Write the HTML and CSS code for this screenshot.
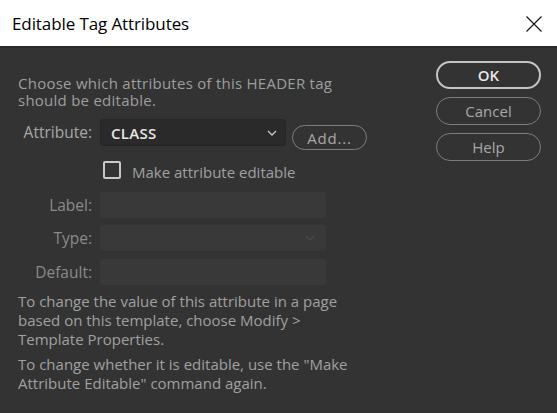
FILE: index.html
```html
<!DOCTYPE html>
<html>
<head>
<meta charset="utf-8">
<link rel="stylesheet" href="styles.css">
</head>
<body>
<div class="dialog">
  <div class="titlebar">
    <span class="title">Editable Tag Attributes</span>
    <svg class="close" width="16" height="16" viewBox="0 0 16 16"><path d="M0.5 0.5 L15.5 15.5 M15.5 0.5 L0.5 15.5" stroke="#111" stroke-width="1.1" fill="none"/></svg>
  </div>
  <div class="content">
    <div class="main">
      <p class="intro"><span class="ln">Choose which attributes of this HEADER tag</span><span class="ln">should be editable.</span></p>
      <div class="attr-row">
        <span class="lbl bright">Attribute:</span>
        <div class="select">
          <span class="val">CLASS</span>
          <svg class="chev" width="10" height="6" viewBox="0 0 10 6"><path d="M1 1 L5 5 L9 1" stroke="#c8c8c8" stroke-width="1.3" fill="none"/></svg>
        </div>
        <button class="pill add">Add...</button>
      </div>
      <div class="check-row">
        <span class="checkbox"></span>
        <span class="check-text">Make attribute editable</span>
      </div>
      <div class="field-row">
        <span class="lbl">Label:</span>
        <div class="field"></div>
      </div>
      <div class="field-row">
        <span class="lbl">Type:</span>
        <div class="field">
          <svg class="chev" width="10" height="6" viewBox="0 0 10 6"><path d="M1 1 L5 5 L9 1" stroke="#4a4a4a" stroke-width="1.3" fill="none"/></svg>
        </div>
      </div>
      <div class="field-row last">
        <span class="lbl">Default:</span>
        <div class="field"></div>
      </div>
      <p class="note">To change the value of this attribute in a page<br>based on this template, choose Modify &gt;<br>Template Properties.</p>
      <p class="note second">To change whether it is editable, use the "Make<br>Attribute Editable" command again.</p>
    </div>
    <div class="side">
      <button class="pill big ok">OK</button>
      <button class="pill big">Cancel</button>
      <button class="pill big">Help</button>
    </div>
  </div>
</div>
</body>
</html>
```

FILE: styles.css
```css
html, body {
  margin: 0;
  padding: 0;
  background: #333333;
}
body {
  font-family: "Open Sans", "Noto Sans", sans-serif;
  width: 557px;
  height: 413px;
  overflow: hidden;
}
.dialog {
  width: 557px;
  height: 413px;
  display: flex;
  flex-direction: column;
}
.titlebar {
  height: 46px;
  flex: none;
  background: #ffffff;
  display: flex;
  align-items: center;
  justify-content: space-between;
  padding: 1px 15px 0 12px;
  box-sizing: border-box;
}
.title {
  font-family: "Open Sans", "Noto Sans", sans-serif;
  font-size: 17px;
  color: #000;
  letter-spacing: -0.1px;
}
.close {
  display: block;
}
.content {
  flex: 1;
  background: #333333;
  border-top: 2px solid #2b2b2b;
  display: flex;
  justify-content: space-between;
  padding: 13px 16px 0 18px;
}
.main {
  width: 350px;
  font-size: 15px;
  color: #a3a3a3;
}
.intro {
  margin: 14px 0 0 0;
  font-size: 15px;
  letter-spacing: 0.25px;
  color: #9e9e9e;
}
.intro .ln {
  display: block;
  height: 17px;
  line-height: 17px;
  white-space: nowrap;
}
.attr-row {
  display: flex;
  align-items: flex-start;
  margin-top: 10px;
  height: 27px;
}
.lbl {
  width: 74px;
  text-align: right;
  box-sizing: border-box;
  color: #8a8a8a;
  flex: none;
  line-height: 26px;
  font-size: 15.5px;
}
.lbl.bright {
  color: #a8a8a8;
  line-height: 27px;
}
.select {
  margin-left: 8px;
  width: 186px;
  height: 27px;
  box-sizing: border-box;
  background: #2a2a2a;
  border: 1px solid #262626;
  border-radius: 3px;
  display: flex;
  align-items: center;
  justify-content: space-between;
  padding: 0 8px 0 10px;
}
.val {
  color: #e6e6e6;
  font-weight: 600;
  font-size: 15px;
  letter-spacing: 0.3px;
}
.chev {
  display: block;
}
.pill {
  font-family: "Open Sans", "Noto Sans", sans-serif;
  background: transparent;
  border: 1.5px solid #7d7d7d;
  color: #a8a8a8;
  border-radius: 13px;
  font-size: 15px;
  padding: 0;
  box-sizing: border-box;
  display: flex;
  align-items: center;
  justify-content: center;
}
.add {
  margin-left: 6px;
  margin-top: 6px;
  width: 75px;
  height: 25px;
  letter-spacing: 0.8px;
}
.check-row {
  display: flex;
  align-items: center;
  margin-top: 15px;
  padding-left: 85px;
  height: 18px;
}
.checkbox {
  width: 18px;
  height: 18px;
  box-sizing: border-box;
  border: 2px solid #c8c8c8;
  border-radius: 2px;
  flex: none;
}
.check-text {
  margin-left: 11px;
  font-size: 15px;
  color: #a0a0a0;
  padding-top: 3px;
}
.field-row {
  display: flex;
  align-items: center;
  margin-top: 7px;
  height: 26px;
}
.check-row + .field-row {
  margin-top: 13px;
}
.field-row.last {
  margin-top: 8px;
}
.field {
  margin-left: 8px;
  width: 226px;
  height: 26px;
  background: #393939;
  border-radius: 3px;
  display: flex;
  align-items: center;
  justify-content: flex-end;
  padding-right: 11px;
  box-sizing: border-box;
}
.note {
  margin: 7px 0 0 0;
  line-height: 19px;
  color: #a0a0a0;
  font-size: 15px;
}
.note.second {
  margin-top: 6px;
}
.side {
  width: 105px;
  display: flex;
  flex-direction: column;
  gap: 8px;
}
.pill.big {
  width: 105px;
  height: 28px;
  border-radius: 14px;
  font-size: 15px;
}
.pill.ok {
  border: 2px solid #c4c4c4;
  color: #e8e8e8;
  font-weight: 600;
}
```
